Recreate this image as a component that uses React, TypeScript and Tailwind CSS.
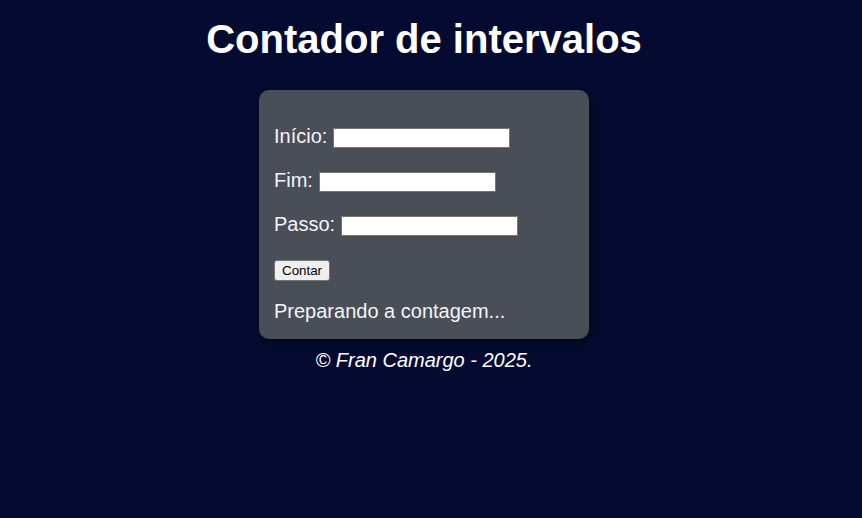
import React from "react";

export default function App() {
  return (
    <div className="w-full min-h-[518px] bg-[#050b30] text-white" style={{ fontFamily: '"Liberation Sans", Arial, sans-serif' }}>
      <div className="w-[848px] flex flex-col items-center pt-[16px]">
        <h1 className="text-[40px] leading-[46px] font-bold text-white">Contador de intervalos</h1>
        <div className="mt-[28px] w-[330px] h-[249px] bg-[#4a4e57] rounded-[10px] shadow-[2px_4px_10px_rgba(0,0,0,0.45)] px-[15px] pt-[33px] flex flex-col">
          <div className="flex items-start h-[25px]">
            <span className="pt-[2px] text-[20px] leading-[23px] text-[#f2f4f7]">Início:</span>
            <input className="ml-[6px] mt-[5px] w-[177px] h-[20px] bg-white border border-[#767676] outline-none" />
          </div>
          <div className="flex items-start h-[25px] mt-[19px]">
            <span className="pt-[2px] text-[20px] leading-[23px] text-[#f2f4f7]">Fim:</span>
            <input className="ml-[6px] mt-[5px] w-[177px] h-[20px] bg-white border border-[#767676] outline-none" />
          </div>
          <div className="flex items-start h-[25px] mt-[19px]">
            <span className="pt-[2px] text-[20px] leading-[23px] text-[#f2f4f7]">Passo:</span>
            <input className="ml-[6px] mt-[5px] w-[177px] h-[20px] bg-white border border-[#767676] outline-none" />
          </div>
          <div className="mt-[24px] flex">
            <button className="h-[21px] px-[7px] text-[13.33px] leading-[16px] bg-[#efefef] text-black border border-[#767676] rounded-[3px]">Contar</button>
          </div>
          <p className="mt-[19px] text-[20px] leading-[23px] text-[#f2f4f7]">Preparando a contagem...</p>
        </div>
        <p className="mt-[10px] text-[20px] leading-[23px] italic text-white">© Fran Camargo - 2025.</p>
      </div>
    </div>
  );
}
